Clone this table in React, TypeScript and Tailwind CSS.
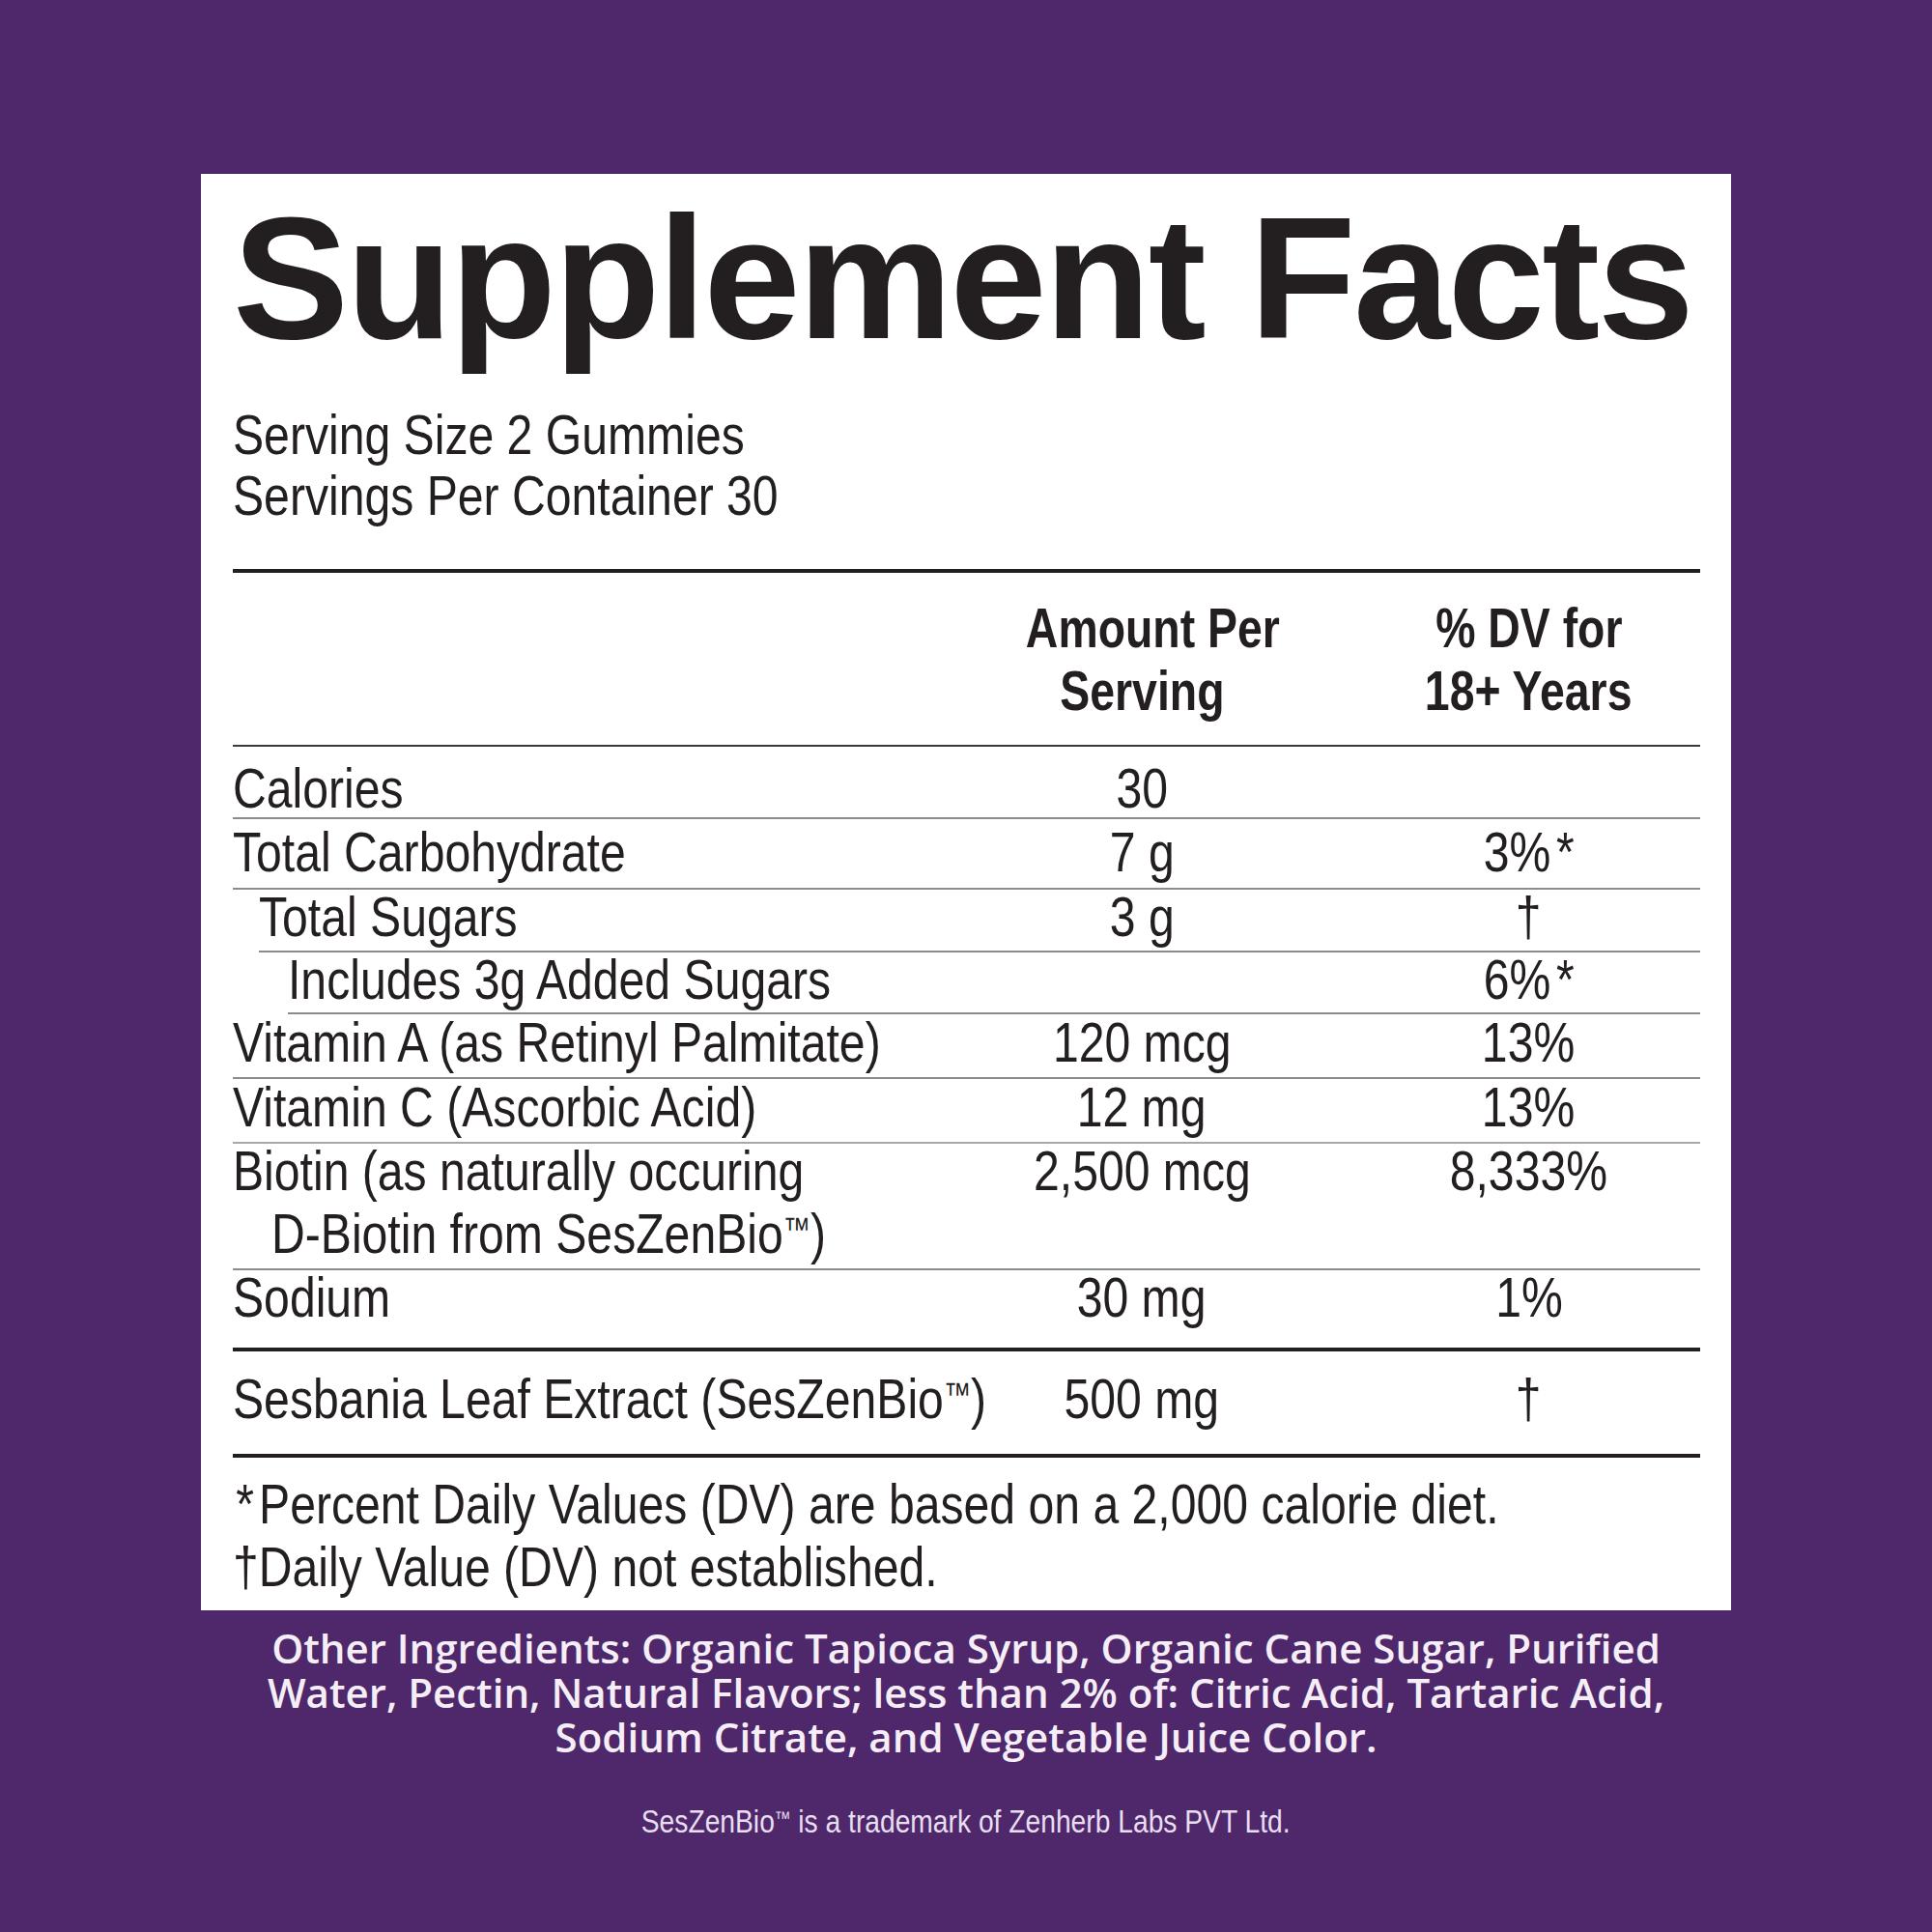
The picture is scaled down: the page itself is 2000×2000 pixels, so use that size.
import React from "react";

const sans = "font-['Liberation_Sans',Arial,sans-serif]";

function L({ children }: { children: React.ReactNode }) {
  return <span className="inline-block origin-left scale-x-[0.83]">{children}</span>;
}

function C({ children }: { children: React.ReactNode }) {
  return <span className="inline-block origin-center scale-x-[0.83]">{children}</span>;
}

function B({ children }: { children: React.ReactNode }) {
  return <span className="inline-block origin-center scale-x-[0.8]">{children}</span>;
}

function TM() {
  return <span className="relative -top-[13px] text-[34px] leading-none">™</span>;
}

function Star() {
  return <span className="ml-[7px]">*</span>;
}

export default function App() {
  return (
    <div className="w-[2000px] h-[2000px] bg-[#4e286b] flex flex-col items-center">
      <div className={`mt-[180px] w-[1584px] bg-white pl-[33px] pr-[32px] text-[#231f20] ${sans}`}>
        <div className="pt-[18px] text-[180px] leading-[180px] font-bold tracking-[-2.5px] whitespace-nowrap">
          Supplement Facts
        </div>
        <div className="mt-[40px] mb-[45px] text-[58px] leading-[63px] whitespace-nowrap">
          <div><L>Serving Size 2 Gummies</L></div>
          <div><L>Servings Per Container 30</L></div>
        </div>

        <div className="text-[58px] leading-[56px]">
          {/* Header */}
          <div className="grid grid-cols-[788px_306px_70px_355px] border-t-4 border-b-2 border-t-[#231f20] border-b-[#3a3a3a] pt-[24px] pb-[24px] font-bold leading-[65px]">
            <div></div>
            <div className="text-center whitespace-nowrap">
              <div><B>Amount Per</B></div>
              <div><B>Serving</B></div>
            </div>
            <div></div>
            <div className="text-center whitespace-nowrap">
              <div><B>% DV for</B></div>
              <div><B>18+ Years</B></div>
            </div>
          </div>

          {/* Calories */}
          <div className="grid grid-cols-[788px_306px_70px_355px] border-b-2 border-[#8c8c8c] pt-[15px] pb-[2px] whitespace-nowrap">
            <div><L>Calories</L></div>
            <div className="text-center"><C>30</C></div>
            <div></div>
            <div className="text-center"></div>
          </div>

          {/* Total Carbohydrate */}
          <div className="grid grid-cols-[788px_306px_70px_355px] border-b-2 border-[#8c8c8c] pt-[6px] pb-[9px] whitespace-nowrap">
            <div><L>Total Carbohydrate</L></div>
            <div className="text-center"><C>7 g</C></div>
            <div></div>
            <div className="text-center"><C>3%<Star /></C></div>
          </div>

          {/* Total Sugars */}
          <div className="ml-[27px] grid grid-cols-[761px_306px_70px_355px] border-b-2 border-[#8c8c8c] pt-[0px] pb-[7px] whitespace-nowrap">
            <div><L>Total Sugars</L></div>
            <div className="text-center"><C>3 g</C></div>
            <div></div>
            <div className="text-center"><C>†</C></div>
          </div>

          {/* Includes */}
          <div className="ml-[57px] grid grid-cols-[731px_306px_70px_355px] border-b-2 border-[#8c8c8c] pt-[0px] pb-[6px] whitespace-nowrap">
            <div><L>Includes 3g Added Sugars</L></div>
            <div className="text-center"></div>
            <div></div>
            <div className="text-center"><C>6%<Star /></C></div>
          </div>

          {/* Vitamin A */}
          <div className="grid grid-cols-[788px_306px_70px_355px] border-b-2 border-[#8c8c8c] pt-[1px] pb-[8px] whitespace-nowrap">
            <div><L>Vitamin A (as Retinyl Palmitate)</L></div>
            <div className="text-center"><C>120 mcg</C></div>
            <div></div>
            <div className="text-center"><C>13%</C></div>
          </div>

          {/* Vitamin C */}
          <div className="grid grid-cols-[788px_306px_70px_355px] border-b-2 border-[#a8a8a8] pt-[1px] pb-[8px] whitespace-nowrap">
            <div><L>Vitamin C (Ascorbic Acid)</L></div>
            <div className="text-center"><C>12 mg</C></div>
            <div></div>
            <div className="text-center"><C>13%</C></div>
          </div>

          {/* Biotin */}
          <div className="grid grid-cols-[788px_306px_70px_355px] border-b-2 border-[#8c8c8c] pt-[0px] pb-[8px] whitespace-nowrap">
            <div>
              <div><L>Biotin (as naturally occuring</L></div>
              <div className="mt-[9px] pl-[40px]">
                <L>D-Biotin from SesZenBio<TM />)</L>
              </div>
            </div>
            <div className="text-center"><C>2,500 mcg</C></div>
            <div></div>
            <div className="text-center"><C>8,333%</C></div>
          </div>

          {/* Sodium */}
          <div className="grid grid-cols-[788px_306px_70px_355px] border-b-4 border-[#231f20] pt-[0px] pb-[24px] whitespace-nowrap">
            <div><L>Sodium</L></div>
            <div className="text-center"><C>30 mg</C></div>
            <div></div>
            <div className="text-center"><C>1%</C></div>
          </div>

          {/* Sesbania */}
          <div className="grid grid-cols-[788px_306px_70px_355px] border-b-4 border-[#231f20] pt-[21px] pb-[29px] whitespace-nowrap">
            <div>
              <L>Sesbania Leaf Extract (SesZenBio<TM />)</L>
            </div>
            <div className="text-center"><C>500 mg</C></div>
            <div></div>
            <div className="text-center"><C>†</C></div>
          </div>

          {/* Footnotes */}
          <div className="pt-[15px] pb-[13px] leading-[65px] whitespace-nowrap">
            <div>
              <L>
                <span className="ml-[4px]">*</span>
                <span className="ml-[6px]">Percent Daily Values (DV) are based on a 2,000 calorie diet.</span>
              </L>
            </div>
            <div><L>†Daily Value (DV) not established.</L></div>
          </div>
        </div>
      </div>

      <div className="mt-[16px] text-center text-[42px] leading-[46px] font-semibold text-[#f6eef7] font-['Open_Sans',sans-serif] whitespace-nowrap">
        <div>Other Ingredients: Organic Tapioca Syrup, Organic Cane Sugar, Purified</div>
        <div>Water, Pectin, Natural Flavors; less than 2% of: Citric Acid, Tartaric Acid,</div>
        <div>Sodium Citrate, and Vegetable Juice Color.</div>
      </div>

      <div className={`${sans} mt-[44px] text-center text-[34px] leading-[40px] text-[#e8def0] whitespace-nowrap`}>
        <C>
          SesZenBio<span className="relative -top-[8px] text-[20px] leading-none">™</span> is a trademark of Zenherb Labs PVT Ltd.
        </C>
      </div>
    </div>
  );
}
